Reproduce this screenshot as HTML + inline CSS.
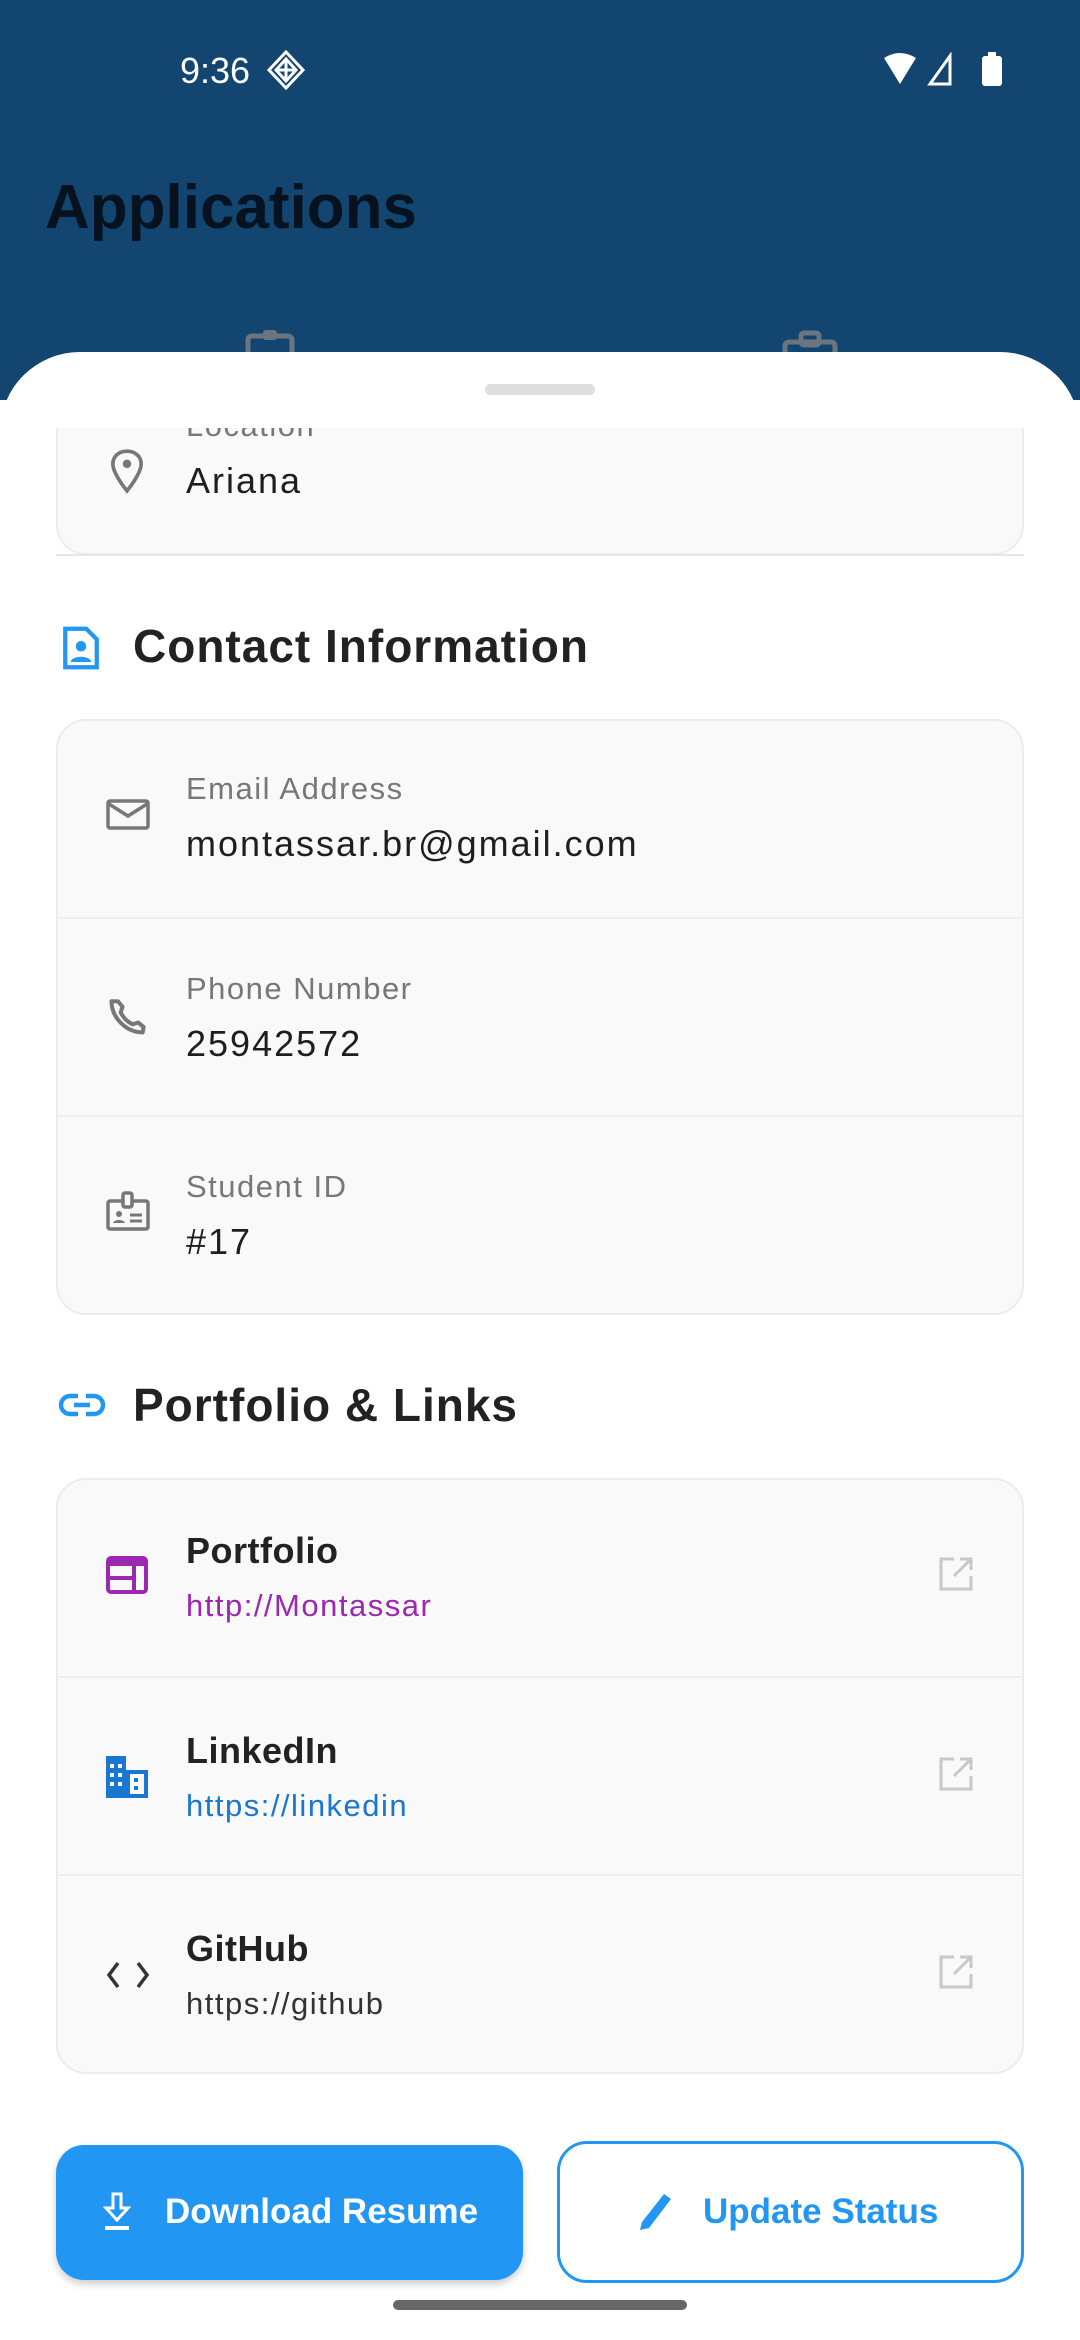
<!DOCTYPE html>
<html><head><meta charset="utf-8"><style>
*{margin:0;padding:0;box-sizing:border-box}
body{width:1080px;height:2340px;overflow:hidden;background:#fff;font-family:"Liberation Sans",sans-serif;position:relative}
.hdr{position:absolute;left:0;top:0;width:1080px;height:400px;background:#12456f}
.abs{position:absolute}
.sheet{position:absolute;left:0;top:352px;width:1080px;height:1988px;background:#fff;border-radius:80px 80px 0 0}
.card{position:absolute;left:56px;width:968px;background:#f9f9f9;border:2px solid #ececec;border-radius:30px;overflow:hidden}
.row{position:absolute;left:0;width:100%;height:198px;border-top:2px solid #eeeeee}
.lbl{position:absolute;left:128px;font-size:31px;color:#777;letter-spacing:1.5px}
.val{position:absolute;left:128px;font-size:36px;color:#1e1e1e;letter-spacing:2px}
.ttl{position:absolute;left:128px;font-size:36px;color:#222;font-weight:bold;letter-spacing:.5px}
.ic{position:absolute;left:48px}
.h2{position:absolute;left:133px;font-size:46px;font-weight:bold;color:#222;letter-spacing:1px}
.ext{position:absolute;left:880px}
</style></head><body>
<div class="hdr"></div>
<div class="abs" style="left:180px;top:50px;font-size:36px;color:#fff">9:36</div>
<svg class="abs" style="left:266px;top:50px" width="40" height="40" viewBox="0 0 40 40"><path d="M20 2 L37 20 L20 38 L3 20Z M20 9 L30 20 L20 31 L10 20Z M10 20H30 M20 9V31" fill="none" stroke="#fff" stroke-width="3"/></svg>
<svg class="abs" style="left:880px;top:52px" width="130" height="36" viewBox="0 0 130 36"><path d="M4 6 Q20 -4 36 6 L20 32Z" fill="#fff"/><path d="M50 32 L70 4 L70 32Z" fill="none" stroke="#fff" stroke-width="3"/><rect x="102" y="4" width="20" height="30" rx="3" fill="#fff"/><rect x="108" y="0" width="8" height="5" fill="#fff"/></svg>
<div class="abs" style="left:45px;top:172px;font-size:62px;font-weight:bold;color:#06121f">Applications</div>
<svg class="abs" style="left:245px;top:328px" width="52" height="30"><rect x="3" y="8" width="44" height="30" rx="4" fill="none" stroke="#6b7580" stroke-width="5"/><rect x="18" y="2" width="14" height="10" rx="3" fill="#6b7580"/></svg>
<svg class="abs" style="left:782px;top:330px" width="56" height="30"><rect x="3" y="12" width="50" height="30" rx="4" fill="none" stroke="#6b7580" stroke-width="5"/><rect x="19" y="3" width="18" height="12" rx="3" fill="none" stroke="#6b7580" stroke-width="5"/></svg>
<div class="sheet"></div>
<div class="abs" style="left:485px;top:384px;width:110px;height:11px;border-radius:6px;background:#dedede"></div>

<div style="position:absolute;left:0;top:428px;width:1080px;height:1912px;overflow:hidden">
 <div class="card" style="top:-120px;height:247px">
  <svg class="ic" style="left:52px;top:138px" width="34" height="46" viewBox="0 0 24 32"><path d="M12 2C6 2 2 6 2 11c0 7 10 19 10 19s10-12 10-19c0-5-4-9-10-9z" fill="none" stroke="#777" stroke-width="2.6"/><circle cx="12" cy="11" r="3" fill="#777"/></svg>
  <div class="lbl" style="top:98px">Location</div>
  <div class="val" style="top:150px">Ariana</div>
 </div>
 <div class="abs" style="left:56px;top:126px;width:968px;height:2px;background:#e6e6e6"></div>
</div>

<svg class="abs" style="left:60px;top:625px" width="42" height="46" viewBox="0 0 24 26"><path d="M3 2h12l6 6v16H3z" fill="none" stroke="#2196f3" stroke-width="2.4"/><circle cx="12" cy="12" r="3" fill="#2196f3"/><path d="M6 21c1-4 11-4 12 0z" fill="#2196f3"/></svg>
<div class="h2" style="top:619px">Contact Information</div>

<div class="card" style="top:719px;height:596px">
 <div class="row" style="top:-2px;border-top:none">
  <svg class="ic" style="top:80px" width="44" height="32" viewBox="0 0 44 32"><rect x="2" y="2" width="40" height="27" rx="2" fill="none" stroke="#777" stroke-width="3.5"/><path d="M3 5 L22 17 L41 5" fill="none" stroke="#777" stroke-width="3.5"/></svg>
  <div class="lbl" style="top:52px">Email Address</div>
  <div class="val" style="top:104px">montassar.br@gmail.com</div>
 </div>
 <div class="row" style="top:196px">
  <svg class="ic" style="top:76px" width="44" height="44" viewBox="0 0 24 24"><path d="M6.6 3.5 L9 6.5 8 9.5c1.5 3 3.5 5 6.5 6.5l3-1 3 2.4-.5 3c-9 0-17-8-17-17z" fill="none" stroke="#777" stroke-width="2.2" stroke-linejoin="round"/></svg>
  <div class="lbl" style="top:52px">Phone Number</div>
  <div class="val" style="top:104px">25942572</div>
 </div>
 <div class="row" style="top:394px">
  <svg class="ic" style="top:74px" width="44" height="40" viewBox="0 0 44 40"><rect x="2" y="10" width="40" height="28" rx="2" fill="none" stroke="#777" stroke-width="3.5"/><rect x="17" y="2" width="9" height="14" rx="2" fill="#f9f9f9" stroke="#777" stroke-width="3.5"/><circle cx="13" cy="23" r="3" fill="#777"/><path d="M7 32c1-4 11-4 12 0z" fill="#777"/><path d="M24 24h12M24 30h12" stroke="#777" stroke-width="3"/></svg>
  <div class="lbl" style="top:52px">Student ID</div>
  <div class="val" style="top:104px">#17</div>
 </div>
</div>

<svg class="abs" style="left:58px;top:1390px" width="48" height="30" viewBox="0 0 24 15"><path d="M10 3H6a4.5 4.5 0 0 0 0 9h4M14 3h4a4.5 4.5 0 0 1 0 9h-4M8 7.5h8" fill="none" stroke="#2196f3" stroke-width="2.2"/></svg>
<div class="h2" style="top:1378px">Portfolio &amp; Links</div>

<div class="card" style="top:1478px;height:596px">
 <div class="row" style="top:-2px;border-top:none">
  <svg class="ic" style="left:48px;top:78px" width="42" height="38" viewBox="0 0 42 38"><rect x="2" y="2" width="38" height="34" rx="3" fill="none" stroke="#9c27b0" stroke-width="4"/><rect x="2" y="2" width="38" height="8" fill="#9c27b0"/><path d="M4 22H28M28 10V36" stroke="#9c27b0" stroke-width="4"/></svg>
  <div class="ttl" style="top:52px">Portfolio</div>
  <div class="lbl" style="top:110px;color:#9c27b0">http://Montassar</div>
  <svg class="ext" style="top:78px" width="36" height="36" viewBox="0 0 36 36"><path d="M16 3H3v30h30V20M22 3h11v11M33 3 16 20" fill="none" stroke="#c8c8c8" stroke-width="3"/></svg>
 </div>
 <div class="row" style="top:196px">
  <svg class="ic" style="left:48px;top:78px" width="42" height="42" viewBox="0 0 42 42"><rect x="0" y="0" width="20" height="42" fill="#1976d2"/><rect x="20" y="14" width="22" height="28" fill="#1976d2"/><rect x="24" y="18" width="14" height="20" fill="#f9f9f9"/><g fill="#f9f9f9"><rect x="4" y="8" width="4" height="4"/><rect x="12" y="8" width="4" height="4"/><rect x="4" y="17" width="4" height="4"/><rect x="12" y="17" width="4" height="4"/><rect x="4" y="26" width="4" height="4"/><rect x="12" y="26" width="4" height="4"/></g><g fill="#1976d2"><rect x="28" y="22" width="4" height="4"/><rect x="28" y="30" width="4" height="4"/></g></svg>
  <div class="ttl" style="top:52px">LinkedIn</div>
  <div class="lbl" style="top:110px;color:#1976d2">https://linkedin</div>
  <svg class="ext" style="top:78px" width="36" height="36" viewBox="0 0 36 36"><path d="M16 3H3v30h30V20M22 3h11v11M33 3 16 20" fill="none" stroke="#c8c8c8" stroke-width="3"/></svg>
 </div>
 <div class="row" style="top:394px">
  <svg class="ic" style="left:48px;top:84px" width="44" height="30" viewBox="0 0 44 30"><path d="M12 3 3 15l9 12M32 3l9 12-9 12" fill="none" stroke="#333" stroke-width="3.5"/></svg>
  <div class="ttl" style="top:52px">GitHub</div>
  <div class="lbl" style="top:110px;color:#333">https://github</div>
  <svg class="ext" style="top:78px" width="36" height="36" viewBox="0 0 36 36"><path d="M16 3H3v30h30V20M22 3h11v11M33 3 16 20" fill="none" stroke="#c8c8c8" stroke-width="3"/></svg>
 </div>
</div>

<div class="abs" style="left:56px;top:2145px;width:467px;height:135px;background:#2196f3;border-radius:28px;box-shadow:0 4px 8px rgba(0,0,0,.2)"></div>
<svg class="abs" style="left:102px;top:2192px" width="30" height="40" viewBox="0 0 30 40"><path d="M11 2h8v14h7L15 28 4 16h7z" fill="none" stroke="#fff" stroke-width="3"/><rect x="3" y="34" width="24" height="4" fill="#fff"/></svg>
<div class="abs" style="left:165px;top:2192px;font-size:35px;font-weight:bold;color:#fff">Download Resume</div>
<div class="abs" style="left:557px;top:2141px;width:467px;height:142px;border:3px solid #2196f3;border-radius:30px;background:#fff"></div>
<svg class="abs" style="left:636px;top:2190px" width="40" height="44" viewBox="0 0 40 44"><path d="M4 40 L6 32 L28 4 L35 9 L13 38 Z" fill="#2196f3"/></svg>
<div class="abs" style="left:703px;top:2192px;font-size:35px;font-weight:bold;color:#2196f3">Update Status</div>
<div class="abs" style="left:393px;top:2300px;width:294px;height:10px;border-radius:5px;background:#666"></div>
</body></html>
